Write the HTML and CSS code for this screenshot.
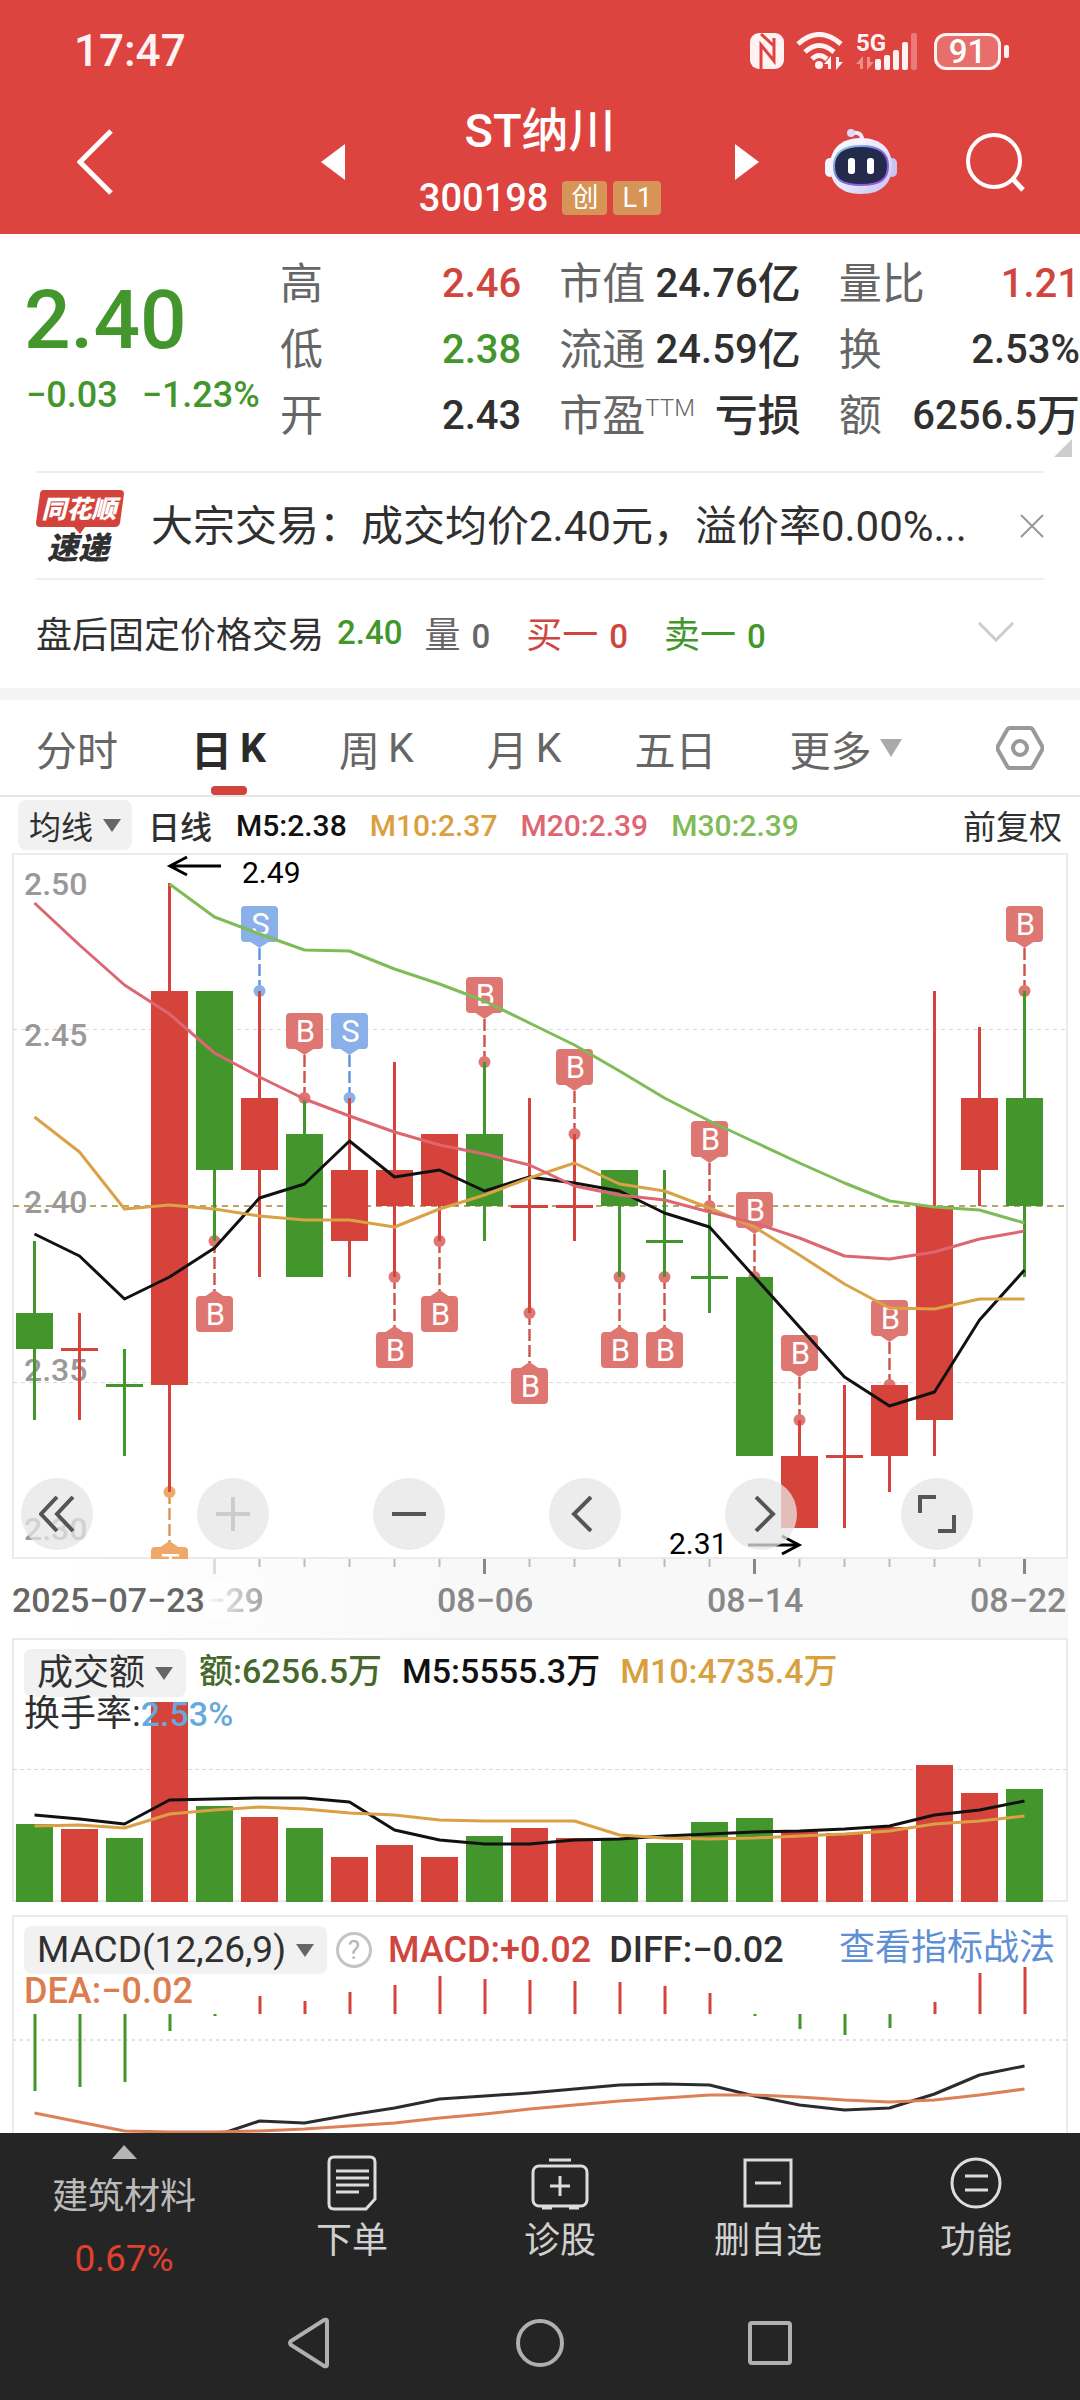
FILE: index.html
```html
<!DOCTYPE html>
<html lang="zh-CN">
<head>
<meta charset="utf-8">
<meta name="viewport" content="width=device-width, initial-scale=1">
<title>ST纳川 300198</title>
<link rel="stylesheet" href="styles.css">
</head>
<body>
<header class="header">
  <div class="status">
    <span class="clock">17:47</span>
    <div class="status-icons">
      <svg width="34" height="36" viewBox="0 0 34 36">
        <rect width="34" height="36" rx="9" fill="#fff2f2"/>
        <path d="M11 37V12L24 28V5M11 1L24 13" fill="none" stroke="#dd4440" stroke-width="3"/>
      </svg>
      <svg width="48" height="38" viewBox="0 0 48 38">
        <g fill="none" stroke="#fff2f2" stroke-width="5">
          <path d="M2 12Q23 -7 45 12"/><path d="M9 20Q23 7 38 20"/><path d="M16 27Q23 20 31 27"/>
        </g>
        <circle cx="23" cy="33" r="4" fill="#fff2f2"/>
        <path d="M28 32l7-8v13h-3v-5zM47 30l-7 8V25h3v5z" fill="#fff2f2"/>
      </svg>
      <svg class="signal" width="62" height="48" viewBox="0 -5 62 48">
        <text x="0" y="19" class="net" fill="#fff2f2">5G</text>
        <path d="M0 32l7-8v13H4v-5zM18 30l-7 8V25h3v5z" fill="#ee8c8a"/>
        <g fill="#fff2f2"><rect x="19" y="27" width="6" height="11" rx="2"/><rect x="28" y="23" width="6" height="15" rx="2"/><rect x="37" y="18" width="6" height="20" rx="2"/><rect x="46" y="10" width="6" height="28" rx="2"/></g>
        <rect x="55" y="1" width="6" height="37" rx="2" fill="#e97a77"/>
      </svg>
      <span class="battery">91</span>
    </div>
  </div>
  <div class="titlebar">
    <button class="icon-btn back" aria-label="返回"><svg width="36" height="66" viewBox="0 0 36 66"><path d="M34 2L3 33L34 64" fill="none" stroke="#fff" stroke-width="5"/></svg></button>
    <div class="stock">
      <button class="icon-btn" aria-label="上一只"><svg width="24" height="36" viewBox="0 0 24 36"><path d="M24 0V36L0 18z" fill="#fff"/></svg></button>
      <div class="stock-name">
        <h1>ST纳川</h1>
        <div class="code">300198<span class="tag">创</span><span class="tag">L1</span></div>
      </div>
      <button class="icon-btn" aria-label="下一只"><svg width="24" height="36" viewBox="0 0 24 36"><path d="M0 0V36L24 18z" fill="#fff"/></svg></button>
    </div>
    <div class="tools">
      <button class="icon-btn" aria-label="智能助手"><svg width="72" height="68" viewBox="0 0 72 68">
        <defs>
          <linearGradient id="shell" x1="0" y1="0" x2="1" y2="1"><stop offset="0" stop-color="#fff"/><stop offset=".6" stop-color="#e4e2fb"/><stop offset="1" stop-color="#c3bdf0"/></linearGradient>
          <linearGradient id="rim" x1="0" y1="0" x2="1" y2="1"><stop offset="0" stop-color="#8edcf2"/><stop offset=".5" stop-color="#7a6ae0"/><stop offset="1" stop-color="#a34fe0"/></linearGradient>
        </defs>
        <path d="M27 5Q38 3 37 14" fill="none" stroke="#efeefc" stroke-width="4"/><circle cx="26" cy="5" r="4" fill="#dcdaf6"/>
        <rect x="0" y="30" width="10" height="19" rx="5" fill="#f3f2fd"/><rect x="62" y="30" width="10" height="19" rx="5" fill="#c9c5f2"/>
        <path d="M36 10C57 10 67 22 67 38S58 66 36 66S5 54 5 38S15 10 36 10z" fill="url(#shell)"/>
        <path d="M36 18C54 18 63 25 63 38S56 57 36 57S9 51 9 38S18 18 36 18z" fill="#242a4a" stroke="url(#rim)" stroke-width="2"/>
        <rect x="23" y="30" width="7" height="16" rx="3" fill="#fff"/><rect x="42" y="30" width="7" height="16" rx="3" fill="#fff"/>
      </svg></button>
      <button class="icon-btn" aria-label="搜索"><svg width="61" height="60" viewBox="0 0 61 60"><circle cx="29" cy="29" r="26" fill="none" stroke="#fff" stroke-width="4"/><path d="M47 46L58 58" stroke="#fff" stroke-width="5"/></svg></button>
    </div>
  </div>
</header>

<main>
<section class="quote">
  <div class="price down">
    <div class="last">2.40</div>
    <div class="change"><span>−0.03</span><span>−1.23%</span></div>
  </div>
  <dl class="stats">
    <div><dt>高</dt><dd class="up">2.46</dd></div>
    <div><dt>低</dt><dd class="down">2.38</dd></div>
    <div><dt>开</dt><dd>2.43</dd></div>
    <div><dt>市值</dt><dd>24.76<span class="unit">亿</span></dd></div>
    <div><dt>流通</dt><dd>24.59<span class="unit">亿</span></dd></div>
    <div><dt>市盈<sup>TTM</sup></dt><dd><span class="unit">亏损</span></dd></div>
    <div><dt>量比</dt><dd class="up">1.21</dd></div>
    <div><dt>换</dt><dd>2.53%</dd></div>
    <div><dt>额</dt><dd>6256.5<span class="unit">万</span></dd></div>
  </dl>
  <svg class="corner" width="18" height="18" viewBox="0 0 18 18"><path d="M18 0V18H0z" fill="#ccc"/></svg>
</section>

<section class="news">
  <svg width="88" height="92" viewBox="0 -9 88 92">
    <path d="M8 1H84Q88 1 88 5L84 34Q83 38 79 38H49L44 45L38 38H4Q0 38 0 34L4 5Q4 1 8 1z" fill="#d4433b"/>
    <text x="43" y="29" class="logo-top">同花顺</text>
    <text x="42" y="70" class="logo-bottom">速递</text>
  </svg>
  <a class="headline" href="#news">大宗交易：成交均价2.40元，溢价率0.00%...</a>
  <button class="icon-btn" aria-label="关闭"><svg width="24" height="24" viewBox="0 0 24 24"><path d="M1 1L23 23M23 1L1 23" stroke="#999" stroke-width="2"/></svg></button>
</section>

<section class="after-hours">
  <span>盘后固定价格交易</span><b class="down fixed">2.40</b>
  <span class="pair muted">量 <b>0</b></span>
  <span class="pair up">买一 <b>0</b></span>
  <span class="pair down">卖一 <b>0</b></span>
  <button class="icon-btn expand" aria-label="展开"><svg width="36" height="20" viewBox="0 0 36 20"><path d="M1 1L18 18L35 1" fill="none" stroke="#ccc" stroke-width="3"/></svg></button>
</section>

<nav class="tabs">
  <button>分时</button>
  <button class="active">日<span>K</span></button>
  <button>周<span>K</span></button>
  <button>月<span>K</span></button>
  <button>五日</button>
  <button>更多<svg width="22" height="18" viewBox="0 0 22 18"><path d="M0 0H22L11 18z" fill="#aaa"/></svg></button>
  <button class="settings" aria-label="设置"><svg width="48" height="46" viewBox="0 0 48 46"><path d="M14 3H34Q36 3 37 5L46 21Q47 23 46 25L37 41Q36 43 34 43H14Q12 43 11 41L2 25Q1 23 2 21L11 5Q12 3 14 3z" fill="none" stroke="#999" stroke-width="4"/><circle cx="24" cy="23" r="7" fill="none" stroke="#999" stroke-width="4"/></svg></button>
</nav>

<div class="ma-row">
  <button class="chip">均线<svg width="18" height="13" viewBox="0 0 18 13"><path d="M0 0H18L9 13z" fill="#666"/></svg></button>
  <span class="period">日线</span>
  <span class="m5">M5:2.38</span><span class="m10">M10:2.37</span><span class="m20">M20:2.39</span><span class="m30">M30:2.39</span>
  <button class="adjust">前复权</button>
</div>

<section class="panel">
  <svg class="chart" id="kline" viewBox="0 853 1080 785" role="img" aria-label="日K线图"></svg>
  <div class="controls">
    <button aria-label="最早"><svg width="36" height="36" viewBox="0 0 36 36"><path d="M18 1L2 18L18 35M34 1L18 18L34 35" fill="none" stroke="#555" stroke-width="4"/></svg></button>
    <button aria-label="放大" disabled><svg width="36" height="36" viewBox="0 0 36 36"><path d="M1 18H35M18 1V35" stroke="#ccc" stroke-width="4"/></svg></button>
    <button aria-label="缩小"><svg width="36" height="36" viewBox="0 0 36 36"><path d="M1 18H35" stroke="#555" stroke-width="4"/></svg></button>
    <button aria-label="左移"><svg width="36" height="36" viewBox="0 0 36 36"><path d="M24 1L7 18L24 35" fill="none" stroke="#555" stroke-width="4"/></svg></button>
    <button aria-label="右移"><svg width="36" height="36" viewBox="0 0 36 36"><path d="M13 1L30 18L13 35" fill="none" stroke="#555" stroke-width="4"/></svg></button>
    <button aria-label="全屏"><svg width="38" height="38" viewBox="0 0 38 38"><path d="M18 2H2V18M36 20V36H20" fill="none" stroke="#555" stroke-width="4"/></svg></button>
  </div>
</section>

<section class="panel">
  <svg class="chart" id="volume" viewBox="0 1638 1080 277" role="img" aria-label="成交额"></svg>
  <div class="legend">
    <div class="legend-row volume-row">
      <button class="chip">成交额<svg width="18" height="13" viewBox="0 0 18 13"><path d="M0 0H18L9 13z" fill="#666"/></svg></button>
      <span class="amount">额:6256.5万</span><span class="m5">M5:5555.3万</span><span class="m10">M10:4735.4万</span>
    </div>
    <div class="turnover">换手率:<span>2.53%</span></div>
  </div>
</section>

<section class="panel">
  <svg class="chart" id="macd" viewBox="0 1915 1080 218" role="img" aria-label="MACD"></svg>
  <div class="legend">
    <div class="legend-row macd-row">
      <button class="chip">MACD(12,26,9)<svg width="18" height="13" viewBox="0 0 18 13"><path d="M0 0H18L9 13z" fill="#666"/></svg></button>
      <button class="help" aria-label="说明">?</button>
      <span class="macd">MACD:+0.02</span><span class="diff">DIFF:−0.02</span>
      <a class="guide" href="#guide">查看指标战法</a>
    </div>
    <div class="dea">DEA:−0.02</div>
  </div>
</section>
</main>

<footer class="footer">
  <nav class="toolbar">
    <button class="sector"><svg width="25" height="14" viewBox="0 0 25 14"><path d="M12 0L25 14H0z" fill="#b5b5b5"/></svg><span>建筑材料</span><span class="rate">0.67%</span></button>
    <button><svg width="56" height="56" viewBox="0 0 56 56"><g fill="none" stroke="#ddd" stroke-width="3"><path d="M10 2H46Q51 2 51 7V44L42 54H10Q5 54 5 49V7Q5 2 10 2z"/><path d="M12 16H45M12 23H45M12 30H45M12 37H35"/></g></svg><span>下单</span></button>
    <button><svg width="60" height="56" viewBox="0 0 60 56"><g fill="none" stroke="#ddd" stroke-width="3"><rect x="3" y="11" width="54" height="40" rx="6"/><path d="M19 5H41M20 31H40M30 21V41M12 53H22M39 53H49"/></g></svg><span>诊股</span></button>
    <button><svg width="56" height="56" viewBox="0 0 56 56"><g fill="none" stroke="#ddd" stroke-width="3"><rect x="5" y="5" width="46" height="46"/><path d="M15 28H41"/></g></svg><span>删自选</span></button>
    <button><svg width="56" height="56" viewBox="0 0 56 56"><g fill="none" stroke="#ddd" stroke-width="3"><circle cx="28" cy="28" r="24"/><path d="M17 21H40M17 35H40"/></g></svg><span>功能</span></button>
  </nav>
  <nav class="system">
    <button class="icon-btn" aria-label="后退"><svg width="48" height="52" viewBox="0 0 48 52"><path d="M42 4V48Q42 50 39 49L6 28Q4 26 6 24L39 3Q42 2 42 4z" fill="none" stroke="#b0b0b0" stroke-width="4"/></svg></button>
    <button class="icon-btn" aria-label="主页"><svg width="48" height="52" viewBox="0 0 48 52"><circle cx="24" cy="26" r="22" fill="none" stroke="#b0b0b0" stroke-width="4"/></svg></button>
    <button class="icon-btn" aria-label="最近任务"><svg width="48" height="52" viewBox="0 0 48 52"><rect x="3" y="6" width="40" height="40" rx="2" fill="none" stroke="#b0b0b0" stroke-width="4"/></svg></button>
  </nav>
</footer>
<script src="chart.js"></script>
</body>
</html>
```
FILE: styles.css
```css
* { box-sizing: border-box; }
body {
  margin: 0;
  background: #fff;
  color: #303030;
  font-family: Roboto, "Noto Sans CJK SC", sans-serif;
  font-size: 36px;
}
button {
  margin: 0;
  padding: 0;
  border: 0;
  background: none;
  color: inherit;
  font: inherit;
  white-space: nowrap;
}
svg { display: block; flex: none; }
a { color: inherit; text-decoration: none; }
.up { color: #cf463e; }
.down { color: #43962c; }
.icon-btn { display: flex; flex: none; }

.header { background: #dd4440; color: #fff; padding-bottom: 12px; }
.status {
  display: flex;
  justify-content: space-between;
  align-items: center;
  height: 102px;
  padding: 0 71px 0 74px;
}
.clock { font-size: 44px; font-weight: 500; color: #fff2f2; }
.status-icons { display: flex; align-items: center; gap: 12px; }
.net { font-size: 24px; font-weight: 700; }
.signal { margin-right: 4px; }
.battery {
  position: relative;
  width: 67px;
  height: 37px;
  margin-right: 8px;
  border: 3px solid #fff2f2;
  border-radius: 12px;
  background: #e66f6c;
  font-size: 33px;
  font-weight: 500;
  line-height: 32px;
  text-align: center;
}
.battery::after {
  content: "";
  position: absolute;
  right: -11px;
  top: 9px;
  width: 5px;
  height: 13px;
  border-radius: 2px;
  background: #fff2f2;
}
.titlebar {
  display: grid;
  grid-template-columns: 1fr minmax(0, 438px) 1fr;
  align-items: center;
  min-height: 120px;
}
.back { margin-left: 77px; }
.stock { display: flex; justify-content: space-between; align-items: center; }
.stock-name { display: flex; flex-direction: column; align-items: center; gap: 16px; }
h1 { margin: 0; font-size: 47px; font-weight: 500; line-height: 56px; }
.code {
  display: flex;
  align-items: center;
  gap: 6px;
  font-size: 38px;
  font-weight: 500;
  line-height: 46px;
}
.tag {
  padding: 0 9px;
  border-radius: 4px;
  background: #d69457;
  font-size: 27px;
  font-weight: 400;
  line-height: 34px;
}
.code .tag:first-child { margin-left: 8px; }
.tools { display: flex; justify-content: flex-end; align-items: center; gap: 68px; padding-right: 54px; }

.quote {
  position: relative;
  display: grid;
  grid-template-columns: 252px minmax(0, 1fr);
  padding: 17px 0 22px 28px;
}
.price { padding-top: 24px; white-space: nowrap; }
.last { font-size: 82px; font-weight: 500; line-height: 90px; margin-left: -4px; }
.change { display: flex; gap: 24px; margin: 8px 0 0 -2px; font-weight: 500; line-height: 44px; }
.stats {
  display: grid;
  grid-template-rows: repeat(3, 66px);
  grid-auto-flow: column;
  grid-auto-columns: minmax(0, 1fr);
  column-gap: 38px;
  margin: 0;
}
.stats > div { display: flex; justify-content: space-between; align-items: center; white-space: nowrap; line-height: 66px; }
.stats dt { display: flex; color: #666; font-size: 43px; }
.stats sup { font-size: 24px; font-weight: 300; line-height: 50px; }
.stats dd { display: flex; margin: 0; font-size: 40px; font-weight: 500; }
.unit { font-size: 43px; }
.corner { position: absolute; right: 8px; bottom: 14px; }

.news {
  display: flex;
  align-items: center;
  gap: 27px;
  height: 109px;
  margin: 0 36px;
  border-top: 2px solid #eee;
  border-bottom: 2px solid #eee;
}
.headline { flex: 1; min-width: 0; overflow: hidden; padding-bottom: 6px; font-size: 42px; white-space: nowrap; }
.logo-top, .logo-bottom { font-family: "Noto Sans CJK SC", sans-serif; font-weight: 900; font-style: italic; text-anchor: middle; }
.logo-top { font-size: 25px; fill: #fff; }
.logo-bottom { font-size: 31px; fill: #303030; }

.after-hours {
  display: flex;
  align-items: center;
  height: 120px;
  padding: 0 66px 4px 36px;
  border-bottom: 12px solid #f4f4f4;
  white-space: nowrap;
}
.after-hours b { font-size: 33px; font-weight: 500; }
.fixed { margin: 0 22px 0 13px; }
.pair { display: flex; align-items: baseline; gap: 11px; margin-right: 36px; }
.muted { color: #666; }
.expand { margin-left: auto; }

.tabs {
  display: flex;
  align-items: stretch;
  gap: 73px;
  height: 97px;
  padding: 0 36px;
  border-bottom: 2px solid #e6e6e6;
  color: #666;
  font-size: 41px;
}
.tabs button { display: flex; align-items: center; gap: 8px; }
.tabs .active { position: relative; color: #2b2b2b; font-weight: 700; }
.tabs .active::after {
  content: "";
  position: absolute;
  left: calc(50% - 18px);
  bottom: 0;
  width: 36px;
  height: 9px;
  border-radius: 4px;
  background: #d0443c;
}
.tabs .settings { margin-left: auto; }

.ma-row { display: flex; align-items: center; height: 56px; padding: 0 18px; font-size: 30px; font-weight: 500; white-space: nowrap; }
.ma-row span { margin-right: 23px; }
.chip { display: flex; align-items: center; justify-content: center; gap: 10px; border-radius: 8px; background: #f1f1f1; }
.ma-row .chip { width: 114px; height: 50px; font-size: 32px; font-weight: 400; }
.ma-row .period { margin: 0 24px 0 16px; font-size: 32px; }
.m5 { color: #111; }
.m10 { color: #d9a03f; }
.m20 { color: #de6673; }
.m30 { color: #7fbb57; }
.adjust { margin-left: auto; font-size: 33px; font-weight: 400; }

.panel { position: relative; }
.chart { width: 100%; height: auto; }
.controls { position: absolute; left: 21px; right: 107px; top: 625px; display: flex; justify-content: space-between; }
.controls button {
  display: flex;
  align-items: center;
  justify-content: center;
  width: 72px;
  height: 72px;
  border-radius: 50%;
  background: rgba(230, 230, 230, .75);
}
.axis { font-size: 34px; font-weight: 500; fill: #888; }
.axis-start { fill: #666; }
.level { font-size: 32px; font-weight: 500; fill: #999; }
.extreme { font-size: 30px; fill: #000; }
.mark { font-size: 31px; fill: #fff; text-anchor: middle; }

.legend { position: absolute; top: 11px; left: 24px; right: 25px; white-space: nowrap; }
.legend-row { display: flex; align-items: center; height: 48px; font-size: 34px; line-height: 44px; }
.legend .chip { height: 48px; padding: 0 13px; }
.volume-row { font-weight: 500; }
.volume-row .chip { font-size: 36px; font-weight: 400; }
.volume-row span { margin-right: 20px; padding-bottom: 4px; }
.volume-row .amount { margin-left: 13px; color: #46692b; }
.turnover { font-size: 36px; line-height: 34px; }
.turnover span { color: #66a9dc; font-size: 34px; font-weight: 500; }
.macd-row, .dea { font-size: 36px; }
.macd-row .chip { font-size: 37px; }
.help {
  width: 36px;
  height: 36px;
  margin: 0 16px 0 9px;
  border: 3px solid #c4c4c4;
  border-radius: 50%;
  color: #b5b5b5;
  font-size: 26px;
  line-height: 30px;
}
.macd { margin-right: 18px; color: #cf463e; }
.guide { margin-left: auto; padding-bottom: 4px; color: #5f90d6; }
.dea { color: #dc7d4f; line-height: 34px; }
.macd, .diff, .dea { font-weight: 500; }

.footer { background: #252525; color: #d0d0d0; }
.toolbar { display: grid; grid-template-columns: 248fr 208fr 208fr 208fr 208fr; height: 149px; }
.toolbar button { display: flex; flex-direction: column; align-items: center; gap: 6px; padding-top: 22px; line-height: 48px; }
.toolbar .sector { gap: 14px; padding-top: 12px; color: #bbb; }
.toolbar .rate { color: #e0402f; font-size: 37px; }
.system { display: flex; justify-content: center; align-items: center; gap: 183px; height: 118px; padding-top: 4px; }
```
FILE: chart.js
```js
// Shared x axis: one slot per trading day
const X0 = 34, STEP = 45, BAR = 37;
const RED = '#d5433a', GREEN = '#43962c';
const cx = i => X0 + STEP * i + 0.5;

const rect = (x, y, w, h, fill, extra = '') => `<rect x="${x}" y="${y}" width="${w}" height="${h}" fill="${fill}" ${extra}/>`;
const line = (ys, color, width = 3) =>
  `<polyline points="${ys.map((y, i) => y === null ? '' : cx(i) + ',' + y).join(' ')}" fill="none" stroke="${color}" stroke-width="${width}" stroke-linejoin="round"/>`;
const dash = (y, color, pattern, w = 1) => `<path d="M13 ${y}H1066" stroke="${color}" stroke-width="${w}" stroke-dasharray="${pattern}"/>`;

// Candles: colour, body top, body bottom, high, low, in cents from 2.40
const candles = [
  ['g', -3, -4, -1, -6], ['r', -4, -4, -3, -6], ['g', -5, -5, -4, -7], ['r', 6, -5, 9, -8],
  ['g', 6, 1, 6, -1], ['r', 3, 1, 6, -2], ['g', 2, -2, 3, -2], ['r', 1, -1, 3, -2],
  ['r', 1, 0, 4, -2], ['r', 2, 0, 2, -1], ['g', 2, 0, 4, -1], ['r', 0, 0, 3, -3],
  ['r', 0, 0, 2, -1], ['g', 1, 0, 1, -2], ['g', -1, -1, 1, -2], ['g', -2, -2, 0, -3],
  ['g', -2, -7, -2, -7], ['r', -7, -9, -6, -9], ['r', -7, -7, -5, -9], ['r', -5, -7, -5, -8],
  ['r', 0, -6, 6, -7], ['r', 3, 1, 5, 0], ['g', 3, 0, 6, -2]
];
const py = n => Math.floor(1206 - n * 35.8);

// Trade markers: day, letter, anchor in cents, side
const marks = [
  [5, 'S', 6, 1], [6, 'B', 3, 1], [7, 'S', 3, 1], [10, 'B', 4, 1], [12, 'B', 2, 1], [15, 'B', 0, 1],
  [16, 'B', -2, 1], [17, 'B', -6, 1], [19, 'B', -5, 1], [22, 'B', 6, 1],
  [4, 'B', -1, 0], [8, 'B', -2, 0], [9, 'B', -1, 0], [11, 'B', -3, 0], [13, 'B', -2, 0], [14, 'B', -2, 0], [3, 'T', -8, 0]
];
const tones = { B: ['#de7672', '#cf5049'], S: ['#8ab0ea', '#5f93dd'], T: ['#f0a868', '#e0914d'] };

function mark([i, letter, n, above]) {
  const x = cx(i), y = py(n), [fill, stroke] = tones[letter];
  const top = above ? y - 85 : y + 55;
  const tip = above ? `M${x - 9} ${top + 36}h18l-9 6z` : `M${x - 9} ${top}h18l-9 -6z`;
  const stem = above ? `M${x} ${top + 42}V${y}` : `M${x} ${y}V${top - 5}`;
  return `<path d="${stem}" stroke="${stroke}" stroke-width="2.4" stroke-dasharray="12 4"/>` +
    `<circle cx="${x}" cy="${y}" r="6" fill="${fill}"/>` +
    rect(x - 18.5, top, 37, 36, fill, 'rx="4"') + `<path d="${tip}" fill="${fill}"/>` +
    `<text class="mark" x="${x + 1}" y="${top + 29}">${letter}</text>`;
}

function kline() {
  let s = '<defs><clipPath id="plot"><rect x="12" y="853" width="1056" height="706"/></clipPath>' +
    '<linearGradient id="fade"><stop offset="0.05" stop-color="#f8f8f8" stop-opacity="0"/><stop offset="0.45" stop-color="#f8f8f8"/></linearGradient>' +
    '<linearGradient id="veil"><stop offset="0" stop-color="#fff"/><stop offset="1" stop-color="#fff" stop-opacity="0.2"/></linearGradient></defs>';
  s += rect(13, 1558, 1055, 80, 'url(#fade)');
  s += '<path d="M13 854H1067V1558H13z" fill="#fff" stroke="#ebebeb" stroke-width="2"/>';
  s += dash(1029.5, '#d8d8d8', '4 4') + dash(1382.5, '#d8d8d8', '4 4') + dash(1206, '#b9a26c', '6 5', 2);
  [['2.50', 895], ['2.45', 1046], ['2.40', 1213], ['2.35', 1381], ['2.30', 1540]].forEach(([t, y]) => {
    s += `<text class="level" x="24" y="${y}">${t}</text>`;
  });
  s += '<g clip-path="url(#plot)">' + marks.map(mark).join('') + '</g>';
  candles.forEach(([c, a, b, h, l], i) => {
    const color = c === 'r' ? RED : GREEN;
    s += rect(cx(i) - 1.5, py(h), 3, py(l) - py(h), color);
    s += a === b ? rect(cx(i) - 18.5, py(a) - 1, BAR, 3, color) : rect(cx(i) - 18.5, py(a), BAR, py(b) - py(a), color);
  });
  s += line([1234, 1256, 1299, 1277, 1248, 1198, 1184, 1141, 1177, 1170, 1191, 1177, 1183, 1191, 1213, 1227, 1277, 1327, 1377, 1406, 1392, 1320, 1270], '#111');
  s += line([1117, 1152, 1209, 1205, 1209, 1216, 1220, 1220, 1227, 1209, 1195, 1178, 1163, 1184, 1191, 1208, 1227, 1255, 1284, 1308, 1309, 1299, 1299], '#d9a246');
  s += line([903, 945, 985, 1014, 1053, 1077, 1099, 1116, 1132, 1145, 1154, 1165, 1186, 1195, 1200, 1212, 1223, 1238, 1256, 1259, 1252, 1239, 1231], '#dd6673');
  s += line([null, null, null, 884, 917, 934, 950, 951, 969, 984, 1001, 1023, 1045, 1071, 1098, 1121, 1142, 1163, 1183, 1201, 1207, 1210, 1223], '#7fbb57');
  s += '<path d="M221 866H171M187 857L170 866L187 875M748 1545H798M782 1536L799 1545L782 1554" fill="none" stroke="#000" stroke-width="3"/>';
  s += '<text class="extreme" x="242" y="883">2.49</text><text class="extreme" x="669" y="1554">2.31</text>';
  for (let i = 4; i < 23; i++) {
    const major = (i - 4) % 6 === 0;
    s += rect(cx(i) - (major ? 1.5 : 1), 1559, major ? 3 : 2, major ? 15 : 8, i === 4 ? '#ddd' : major ? '#888' : '#bbb');
  }
  s += '<text class="axis" x="206" y="1612">−29</text>' + rect(205, 1582, 60, 36, 'url(#veil)');
  s += '<text class="axis axis-start" x="12" y="1612">2025−07−23</text>';
  s += '<text class="axis" x="437" y="1612">08−06</text><text class="axis" x="707" y="1612">08−14</text><text class="axis" x="970" y="1612">08−22</text>';
  return s;
}

function volume() {
  const tops = [1824, 1829, 1838, 1702, 1806, 1817, 1828, 1857, 1845, 1857, 1836, 1828, 1838, 1838, 1843, 1822, 1818, 1831, 1833, 1827, 1765, 1793, 1789];
  let s = '<path d="M13 1639H1067V1901H13z" fill="none" stroke="#ebebeb" stroke-width="2"/>' + dash(1769.5, '#d8d8d8', '4 3');
  s += tops.map((y, i) => rect(cx(i) - 18.5, y, BAR, 1902 - y, candles[i][0] === 'r' ? RED : GREEN)).join('');
  s += line([1815, 1819, 1824, 1800, 1799, 1798, 1798, 1802, 1830, 1840, 1844, 1844, 1840, 1839, 1836, 1834, 1832, 1831, 1829, 1826, 1815, 1810, 1801], '#111');
  s += line([1826, 1825, 1828, 1814, 1810, 1807, 1809, 1813, 1815, 1820, 1821, 1821, 1821, 1835, 1838, 1839, 1838, 1836, 1834, 1831, 1824, 1821, 1816], '#dba045');
  return s;
}

function macd() {
  const ends = [2091, 2087, 2082, 2031, 2016, 1996, 2001, 1992, 1985, 1976, 1979, 1980, 1981, 1982, 1986, 1993, 2016, 2029, 2035, 2028, 2002, 1973, 1967];
  let s = '<path d="M13 2133V1916H1067V2133" fill="none" stroke="#ebebeb" stroke-width="2"/>' + dash(2040, '#e0e0e0', '3 4', 2);
  s += ends.map((y, i) => y < 2014 ? rect(cx(i) - 1, y, 3, 2014 - y, RED) : rect(cx(i) - 1, 2014, 3, y - 2014, GREEN)).join('');
  s += line([null, null, null, null, 2136, 2121, 2123, 2115, 2108, 2099, 2096, 2093, 2089, 2085, 2084, 2085, 2096, 2105, 2110, 2108, 2094, 2075, 2066], '#2c2c2c');
  s += line([2113, 2122, 2131, 2132, 2132, 2131, 2129, 2126, 2123, 2118, 2114, 2109, 2105, 2101, 2098, 2095, 2095, 2097, 2100, 2102, 2100, 2095, 2089], '#dc8058');
  return s;
}

document.getElementById('kline').innerHTML = kline();
document.getElementById('volume').innerHTML = volume();
document.getElementById('macd').innerHTML = macd();
```
